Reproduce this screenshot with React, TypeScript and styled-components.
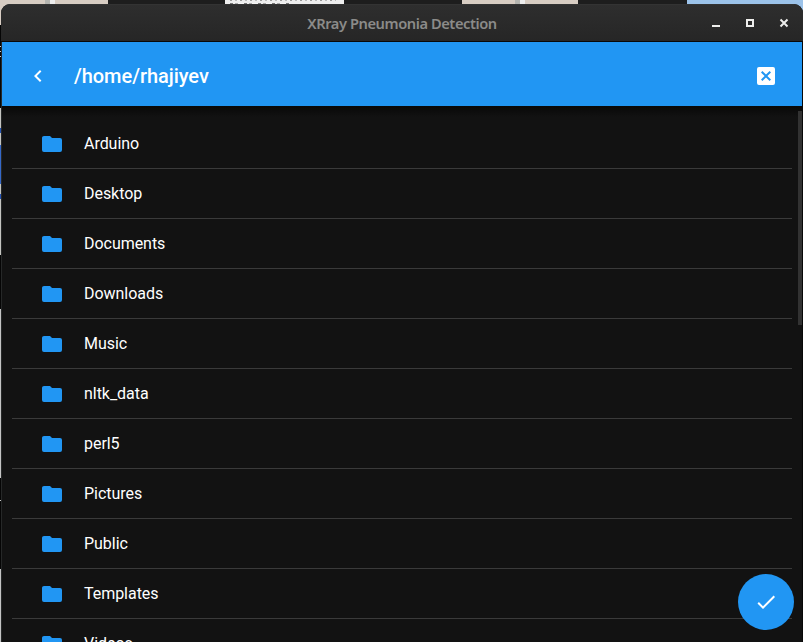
import React from "react";
import styled, { createGlobalStyle } from "styled-components";

const GlobalStyle = createGlobalStyle`
  *, *::before, *::after { box-sizing: border-box; }
  body { margin: 0; overflow: hidden; background: #000; }
`;

const Desktop = styled.div`
  height: 642px;
  width: 803px;
  padding: 4px 0 0 1px;
  overflow: hidden;
  background:
    linear-gradient(#1d1d1d, #1d1d1d) 108px 0 / 117px 5px no-repeat,
    repeating-linear-gradient(90deg, #999 0 2px, #eee 2px 5px, #bbb 5px 7px, #f4f4f4 7px 10px) 230px 0 / 106px 1px no-repeat,
    repeating-linear-gradient(90deg, #777 0 3px, #eee 3px 5px, #aaa 5px 8px, #f4f4f4 8px 14px) 230px 3px / 60px 1px no-repeat,
    linear-gradient(#eee, #eee) 225px 0 / 119px 4px no-repeat,
    linear-gradient(#1d1d1d, #1d1d1d) 344px 0 / 118px 5px no-repeat,
    linear-gradient(#1d1d1d, #1d1d1d) 578px 0 / 109px 5px no-repeat,
    linear-gradient(90deg, #b5b5b0 5px, #eee 5px) 45px 0 / 10px 4px no-repeat,
    linear-gradient(90deg, #b5b5b0 5px, #eee 5px) 515px 0 / 10px 4px no-repeat,
    linear-gradient(#9cc3ea, #9cc3ea) 687px 0 / 116px 22px no-repeat,
    linear-gradient(#d8cdc3, #d8cdc3) 0 0 / 687px 25px no-repeat,
    linear-gradient(#000, #000) 802px 22px / 1px 620px no-repeat,
    linear-gradient(#050505 46px, #ccc 46px 47px, #050505 47px 51px, #ccc 51px 52px, #050505 52px 56px, #ccc 56px 57px, #050505 57px 108px, #c4c4c0 108px 128px, #2453b4 128px 133px, #c4c4c0 133px 145px, #3568c8 145px 184px, #c4c4c0 184px 194px, #2453b4 194px 199px, #c4c4c0 199px 255px, #050505 255px 309px, #c4c4c4 309px 478px, #050505 478px 500px, #ccc 500px 501px, #050505 501px 569px, #c4c4c4 569px) 0 0 / 1px 642px no-repeat,
    #050505;
`;

const Window = styled.main`
  width: 802px;
  height: 638px;
  display: flex;
  flex-direction: column;
  border-radius: 9px 9px 0 0;
  overflow: hidden;
  background: linear-gradient(90deg, #262828 1px, #080808 1px);
`;

const TitleBar = styled.div`
  height: 38px;
  flex: none;
  display: grid;
  grid-template-columns: 110px 1fr 110px;
  align-items: center;
  background: linear-gradient(#2e2e2e, #262626);
  border-bottom: 1px solid #090909;
  border-top: 1px solid #333;
`;

const WindowTitle = styled.h1`
  grid-column: 2;
  margin: 0;
  padding-bottom: 1px;
  text-align: center;
  font: 600 14.67px/20px "Noto Sans", sans-serif;
  letter-spacing: -0.43px;
  color: #8b8b89;
  white-space: nowrap;
`;

const WindowControls = styled.div`
  display: flex;
  justify-content: flex-end;
  gap: 24px;
  padding-right: 14px;
`;

const ControlIcon = styled.svg`
  display: block;
  width: 10px;
  height: 10px;
`;

const Client = styled.div`
  flex: 1;
  min-height: 0;
  width: 800px;
  margin-left: 1px;
  display: flex;
  flex-direction: column;
  background: #121212;
`;

const Toolbar = styled.header`
  height: 64px;
  flex: none;
  display: flex;
  align-items: center;
  padding: 4px 24px 0;
  background: #2196f3;
  color: #fff;
`;

const Icon = styled.svg`
  display: block;
  flex: none;
  width: 24px;
  height: 24px;
  fill: currentColor;
`;

const Path = styled.h2`
  flex: 1;
  margin: 0;
  padding-left: 24px;
  font: 500 20px/28px Roboto, sans-serif;
  letter-spacing: -0.05px;
`;

const FileArea = styled.div`
  flex: 1;
  min-height: 0;
  display: flex;
  overflow: hidden;
  background: linear-gradient(#080808, #121212 11px);
`;

const FileList = styled.ul`
  width: 780px;
  flex: none;
  list-style: none;
  margin: 13px 0 0 10px;
  padding: 0;
`;

const FileRow = styled.li`
  height: 50px;
  display: flex;
  align-items: center;
  gap: 20px;
  padding-left: 28px;
  border-bottom: 1px solid #3a3a3a;
  color: #2196f3;
`;

const FileName = styled.span`
  font: 400 16px/24px Roboto, sans-serif;
  letter-spacing: -0.04px;
  color: #fff;
`;

const Scrollbar = styled.div`
  width: 4px;
  height: 214px;
  margin: 5px 0 0 6px;
  background: #323232;
`;

const SelectButton = styled.button`
  position: absolute;
  left: 738px;
  top: 574px;
  width: 56px;
  height: 56px;
  padding: 0;
  border: 0;
  border-radius: 50%;
  display: grid;
  place-items: center;
  background: #2196f3;
  color: #fff;
`;

const folders = [
  "Arduino", "Desktop", "Documents", "Downloads", "Music", "nltk_data",
  "perl5", "Pictures", "Public", "Templates", "Videos",
];

export default function App() {
  return (
    <Desktop>
      <GlobalStyle />
      <Window>
        <TitleBar>
          <WindowTitle>XRray Pneumonia Detection</WindowTitle>
          <WindowControls>
            <ControlIcon viewBox="0 0 10 10" aria-label="Minimize">
              <path d="M1 7h8v2H1z" fill="#eeeeec" />
            </ControlIcon>
            <ControlIcon viewBox="0 0 10 10" aria-label="Maximize">
              <path d="M2 2h6v6H2z" fill="none" stroke="#eeeeec" strokeWidth="2" />
            </ControlIcon>
            <ControlIcon viewBox="0 0 10 10" aria-label="Close">
              <path d="M1.5 1.5l7 7m0-7l-7 7" stroke="#eeeeec" strokeWidth="2" />
            </ControlIcon>
          </WindowControls>
        </TitleBar>
        <Client>
          <Toolbar>
            <Icon viewBox="0 0 24 24" aria-label="Back">
              <path d="M15.41 16.58L10.83 12l4.58-4.59L14 6l-6 6 6 6 1.41-1.42z" />
            </Icon>
            <Path>/home/rhajiyev</Path>
            <Icon viewBox="0 0 24 24" aria-label="Close browser">
              <path d="M19 3H5a2 2 0 0 0-2 2v14a2 2 0 0 0 2 2h14a2 2 0 0 0 2-2V5a2 2 0 0 0-2-2m-3.4 14L12 13.4 8.4 17 7 15.6l3.6-3.6L7 8.4 8.4 7l3.6 3.6L15.6 7 17 8.4 13.4 12l3.6 3.6-1.4 1.4z" />
            </Icon>
          </Toolbar>
          <FileArea>
            <FileList>
              {folders.map((name) => (
                <FileRow key={name}>
                  <Icon viewBox="0 0 24 24">
                    <path d="M10 4H4c-1.11 0-2 .89-2 2v12a2 2 0 0 0 2 2h16a2 2 0 0 0 2-2V8a2 2 0 0 0-2-2h-8l-2-2z" />
                  </Icon>
                  <FileName>{name}</FileName>
                </FileRow>
              ))}
            </FileList>
            <Scrollbar />
          </FileArea>
        </Client>
      </Window>
      <SelectButton aria-label="Select folder">
        <Icon viewBox="0 0 24 24">
          <path d="M21 7L9 19l-5.5-5.5 1.41-1.41L9 16.17 19.59 5.59 21 7z" />
        </Icon>
      </SelectButton>
    </Desktop>
  );
}
